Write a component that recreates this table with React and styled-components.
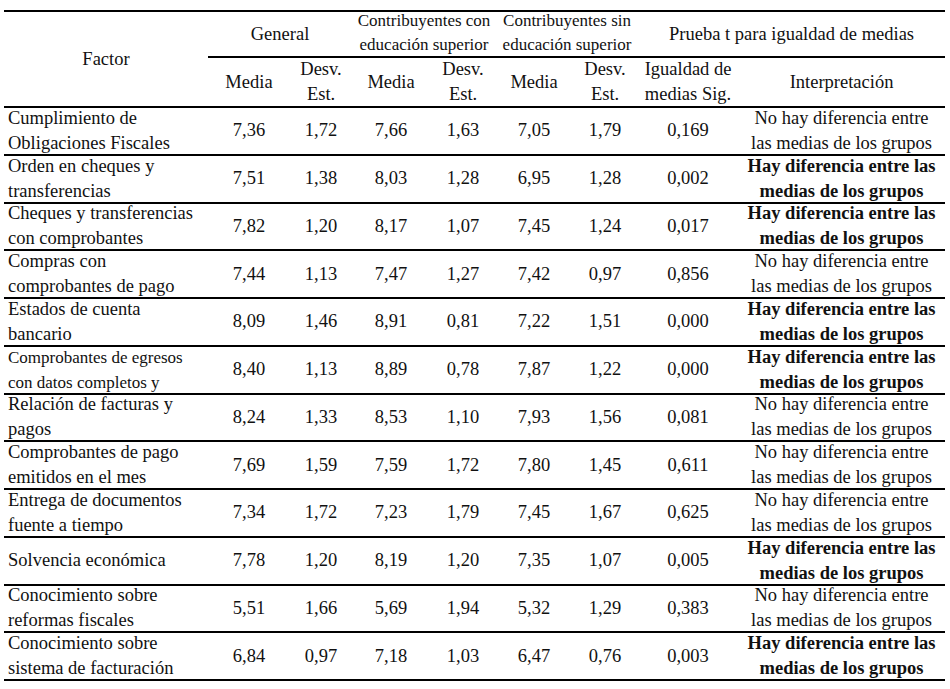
import React from "react";
import styled, { createGlobalStyle } from "styled-components";

const Global = createGlobalStyle`
  html, body { margin: 0; padding: 0; background: #fff; }
  body { font-family: "Liberation Serif", "Times New Roman", serif; color: #111; }
`;

const Page = styled.div`
  padding: 10px 5px 0 4px;
`;

const Table = styled.table`
  width: 941px;
  table-layout: fixed;
  border-collapse: separate;
  border-spacing: 0;
  border-top: 2px solid #000;
  font-size: 18.5px;
`;

const HeadRow = styled.tr`
  height: ${(p) => p.$h}px;
`;

const BodyRow = styled.tr`
  height: 47.75px;
`;

const HeadCell = styled.th`
  font-weight: normal;
  padding: 0;
  text-align: center;
  vertical-align: middle;
  border-bottom: ${(p) => (p.$noLine ? "none" : "2px solid #000")};
  white-space: nowrap;
`;

const HeadBox = styled.div`
  height: ${(p) => p.$h}px;
  display: flex;
  flex-direction: column;
  justify-content: center;
  align-items: center;
  padding-bottom: ${(p) => p.$lift || 0}px;
  box-sizing: border-box;
  font-size: ${(p) => (p.$small ? "17px" : "18.5px")};
  line-height: ${(p) => (p.$small ? "24px" : "25px")};
`;

const Cell = styled.td`
  padding: 0;
  border-bottom: 2px solid #000;
  vertical-align: middle;
  text-align: center;
  white-space: nowrap;
`;

const Box = styled.div`
  height: 44px;
  display: flex;
  flex-direction: column;
  justify-content: center;
  align-items: ${(p) => (p.$left ? "flex-start" : "center")};
  padding-left: ${(p) => (p.$left ? "4px" : "0")};
  line-height: 25px;
  font-size: ${(p) => (p.$small ? "17px" : "inherit")};
  font-weight: ${(p) => (p.$bold ? "bold" : "normal")};
`;

const Line = styled.span`
  display: block;
`;

const rows = [
  [["Cumplimiento de", "Obligaciones Fiscales"], ["7,36", "1,72", "7,66", "1,63", "7,05", "1,79", "0,169"], false],
  [["Orden en cheques y", "transferencias"], ["7,51", "1,38", "8,03", "1,28", "6,95", "1,28", "0,002"], true],
  [["Cheques y transferencias", "con comprobantes"], ["7,82", "1,20", "8,17", "1,07", "7,45", "1,24", "0,017"], true],
  [["Compras con", "comprobantes de pago"], ["7,44", "1,13", "7,47", "1,27", "7,42", "0,97", "0,856"], false],
  [["Estados de cuenta", "bancario"], ["8,09", "1,46", "8,91", "0,81", "7,22", "1,51", "0,000"], true],
  [["Comprobantes de egresos", "con datos completos y"], ["8,40", "1,13", "8,89", "0,78", "7,87", "1,22", "0,000"], true, true],
  [["Relación de facturas y", "pagos"], ["8,24", "1,33", "8,53", "1,10", "7,93", "1,56", "0,081"], false],
  [["Comprobantes de pago", "emitidos en el mes"], ["7,69", "1,59", "7,59", "1,72", "7,80", "1,45", "0,611"], false],
  [["Entrega de documentos", "fuente a tiempo"], ["7,34", "1,72", "7,23", "1,79", "7,45", "1,67", "0,625"], false],
  [["Solvencia económica"], ["7,78", "1,20", "8,19", "1,20", "7,35", "1,07", "0,005"], true],
  [["Conocimiento sobre", "reformas fiscales"], ["5,51", "1,66", "5,69", "1,94", "5,32", "1,29", "0,383"], false],
  [["Conocimiento sobre", "sistema de facturación"], ["6,84", "0,97", "7,18", "1,03", "6,47", "0,76", "0,003"], true],
];

const widths = [204, 82, 62, 78, 66, 76, 66, 100, 207];

const Lines = ({ items }) => items.map((t, i) => <Line key={i}>{t}</Line>);

export default function App() {
  return (
    <Page>
      <Global />
      <Table>
        <colgroup>
          {widths.map((w, i) => (
            <col key={i} style={{ width: w }} />
          ))}
        </colgroup>
        <thead>
          <HeadRow $h={46}>
            <HeadCell rowSpan={2}>
              <HeadBox $h={94}>Factor</HeadBox>
            </HeadCell>
            <HeadCell colSpan={2}>
              <HeadBox $h={44}>General</HeadBox>
            </HeadCell>
            <HeadCell colSpan={2}>
              <HeadBox $h={44} $small $lift={3}>
                <Lines items={["Contribuyentes con", "educación superior"]} />
              </HeadBox>
            </HeadCell>
            <HeadCell colSpan={2}>
              <HeadBox $h={44} $small $lift={3}>
                <Lines items={["Contribuyentes sin", "educación superior"]} />
              </HeadBox>
            </HeadCell>
            <HeadCell colSpan={2}>
              <HeadBox $h={44}>Prueba t para igualdad de medias</HeadBox>
            </HeadCell>
          </HeadRow>
          <HeadRow $h={50}>
            <HeadCell><HeadBox $h={48}>Media</HeadBox></HeadCell>
            <HeadCell><HeadBox $h={48}><Lines items={["Desv.", "Est."]} /></HeadBox></HeadCell>
            <HeadCell><HeadBox $h={48}>Media</HeadBox></HeadCell>
            <HeadCell><HeadBox $h={48}><Lines items={["Desv.", "Est."]} /></HeadBox></HeadCell>
            <HeadCell><HeadBox $h={48}>Media</HeadBox></HeadCell>
            <HeadCell><HeadBox $h={48}><Lines items={["Desv.", "Est."]} /></HeadBox></HeadCell>
            <HeadCell><HeadBox $h={48}><Lines items={["Igualdad de", "medias Sig."]} /></HeadBox></HeadCell>
            <HeadCell><HeadBox $h={48}>Interpretación</HeadBox></HeadCell>
          </HeadRow>
        </thead>
        <tbody>
          {rows.map(([label, nums, diff, small], i) => (
            <BodyRow key={i}>
              <Cell>
                <Box $left $small={small}>
                  <Lines items={label} />
                </Box>
              </Cell>
              {nums.map((n, j) => (
                <Cell key={j}>
                  <Box>{n}</Box>
                </Cell>
              ))}
              <Cell>
                <Box $bold={diff}>
                  <Lines
                    items={
                      diff
                        ? ["Hay diferencia entre las", "medias de los grupos"]
                        : ["No hay diferencia entre", "las medias de los grupos"]
                    }
                  />
                </Box>
              </Cell>
            </BodyRow>
          ))}
        </tbody>
      </Table>
    </Page>
  );
}
